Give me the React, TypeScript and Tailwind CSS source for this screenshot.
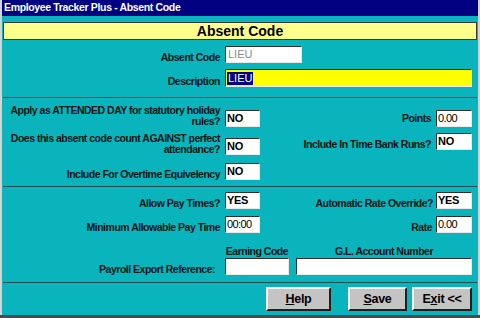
import React from 'react';

const label = "font-bold text-[10.5px] tracking-[-0.5px] leading-[11px] text-[#061414] whitespace-nowrap";

const Field: React.FC<{ value?: string; w: string; mono?: boolean; dim?: boolean }> = ({ value = '', w, mono, dim }) => (
  <div
    className={`${w} h-[17px] shrink-0 bg-white border border-t-[#303030] border-l-[#303030] border-b-[#e8e8e8] border-r-[#e8e8e8] flex items-start pt-[2px] pl-[1px] text-[11px] leading-[11px] ${
      mono ? 'font-normal tracking-[-0.6px] text-black' : dim ? 'font-normal text-[#8a8a8a] pl-[2px]' : 'font-bold tracking-[-0.3px] text-black'
    }`}
  >
    {value}
  </div>
);

const Btn: React.FC<{ w: string; ml: string; children: React.ReactNode }> = ({ w, ml, children }) => (
  <button
    className={`${w} ${ml} h-[24px] bg-[#c4c4c4] border-2 border-t-white border-l-white border-b-[#202020] border-r-[#202020] text-[12.5px] font-bold text-black tracking-[-0.3px] flex items-center justify-center`}
  >
    {children}
  </button>
);

const Sep = () => <div className="mx-[1px] border-t border-[#1d4c50]" />;

export default function App() {
  return (
    <div className="w-[480px] h-[318px] bg-[#d4d4d4] flex flex-col px-[2px] border-b-[3px] border-[#4a4a4a] overflow-hidden font-['Liberation_Sans',Arial,sans-serif]">
      {/* Title bar */}
      <div className="h-[16px] bg-[#000080] text-white font-bold text-[10.5px] tracking-[-0.35px] flex items-center pl-[2px] shrink-0">
        Employee Tracker Plus - Absent Code
      </div>

      <div className="flex-1 bg-[#0ab4bc] flex flex-col">
        {/* Header */}
        <div className="mt-[6px] mx-[1px] h-[18px] border border-[#3a3a3a] bg-[#ffff8c] flex items-center justify-center text-[14px] font-bold text-black">
          Absent Code
        </div>

        {/* Code + description */}
        <div className="mt-[6px] h-[17px] flex items-end">
          <div className={`${label} w-[218px] text-right`}>Absent Code</div>
          <div className="ml-[5px]"><Field value="LIEU" w="w-[77px]" dim /></div>
        </div>
        <div className="mt-[6px] h-[18px] flex items-end">
          <div className={`${label} w-[218px] text-right`}>Description</div>
          <div className="ml-[5px] w-[247px] h-[18px] bg-[#ffff00] border border-t-[#303030] border-l-[#303030] border-b-[#e8e8e8] border-r-[#e8e8e8] flex items-center pl-[1px]">
            <span className="bg-[#000080] text-white text-[11px] font-normal leading-[13px] px-[1px]">LIEU</span>
          </div>
        </div>

        <div className="mt-[10px]"><Sep /></div>

        {/* Section 1 */}
        <div className="flex">
          <div className="flex flex-col">
            <div className="mt-[7px] h-[22px] flex items-end">
              <div className={`${label} w-[218px] text-right`}>
                Apply as ATTENDED DAY for statutory holiday<br />rules?
              </div>
              <div className="ml-[5px]"><Field value="NO" w="w-[35px]" /></div>
            </div>
            <div className="mt-[6px] h-[22px] flex items-end">
              <div className={`${label} w-[218px] text-right`}>
                Does this absent code count AGAINST perfect<br />attendance?
              </div>
              <div className="ml-[5px]"><Field value="NO" w="w-[35px]" /></div>
            </div>
            <div className="mt-[8px] h-[17px] flex items-end">
              <div className={`${label} w-[218px] text-right`}>Include For Overtime Equivelency</div>
              <div className="ml-[5px]"><Field value="NO" w="w-[35px]" /></div>
            </div>
          </div>
          <div className="flex-1 flex flex-col items-end pr-[6px]">
            <div className="mt-[12px] h-[17px] flex items-center">
              <div className={label}>Points</div>
              <div className="ml-[5px]"><Field value="0.00" w="w-[36px]" mono /></div>
            </div>
            <div className="mt-[6px] h-[17px] flex items-end">
              <div className={label}>Include In Time Bank Runs?</div>
              <div className="ml-[5px]"><Field value="NO" w="w-[36px]" /></div>
            </div>
          </div>
        </div>

        <div className="mt-[6px]"><Sep /></div>

        {/* Section 2 */}
        <div className="mt-[5px] h-[17px] flex items-end">
          <div className={`${label} w-[218px] text-right`}>Allow Pay Times?</div>
          <div className="ml-[5px]"><Field value="YES" w="w-[35px]" /></div>
          <div className="flex-1 flex items-end justify-end pr-[6px]">
            <div className={label}>Automatic Rate Override?</div>
            <div className="ml-[3px]"><Field value="YES" w="w-[36px]" /></div>
          </div>
        </div>
        <div className="mt-[7px] h-[17px] flex items-end">
          <div className={`${label} w-[218px] text-right`}>Minimum Allowable Pay Time</div>
          <div className="ml-[5px]"><Field value="00:00" w="w-[35px]" mono /></div>
          <div className="flex-1 flex items-end justify-end pr-[6px]">
            <div className={label}>Rate</div>
            <div className="ml-[4px]"><Field value="0.00" w="w-[36px]" mono /></div>
          </div>
        </div>

        <div className="mt-[13px] h-[11px] flex">
          <div className="w-[223px]" />
          <div className={`${label} w-[64px] text-center`}>Earning Code</div>
          <div className={`${label} ml-[7px] w-[176px] text-center`}>G.L. Account Number</div>
        </div>
        <div className="mt-[1px] h-[17px] flex items-end">
          <div className={`${label} w-[213px] text-right`}>Payroll Export Reference:</div>
          <div className="ml-[10px]"><Field w="w-[64px]" /></div>
          <div className="ml-[7px]"><Field w="w-[176px]" /></div>
        </div>

        <div className="mt-[7px]"><Sep /></div>

        {/* Buttons */}
        <div className="mt-[4px] flex justify-end pr-[6px]">
          <Btn w="w-[65px]" ml="ml-0"><span className="underline">H</span>elp</Btn>
          <Btn w="w-[59px]" ml="ml-[17px]"><span className="underline">S</span>ave</Btn>
          <Btn w="w-[60px]" ml="ml-[5px]">E<span className="underline">x</span>it &lt;&lt;</Btn>
        </div>
      </div>
    </div>
  );
}
